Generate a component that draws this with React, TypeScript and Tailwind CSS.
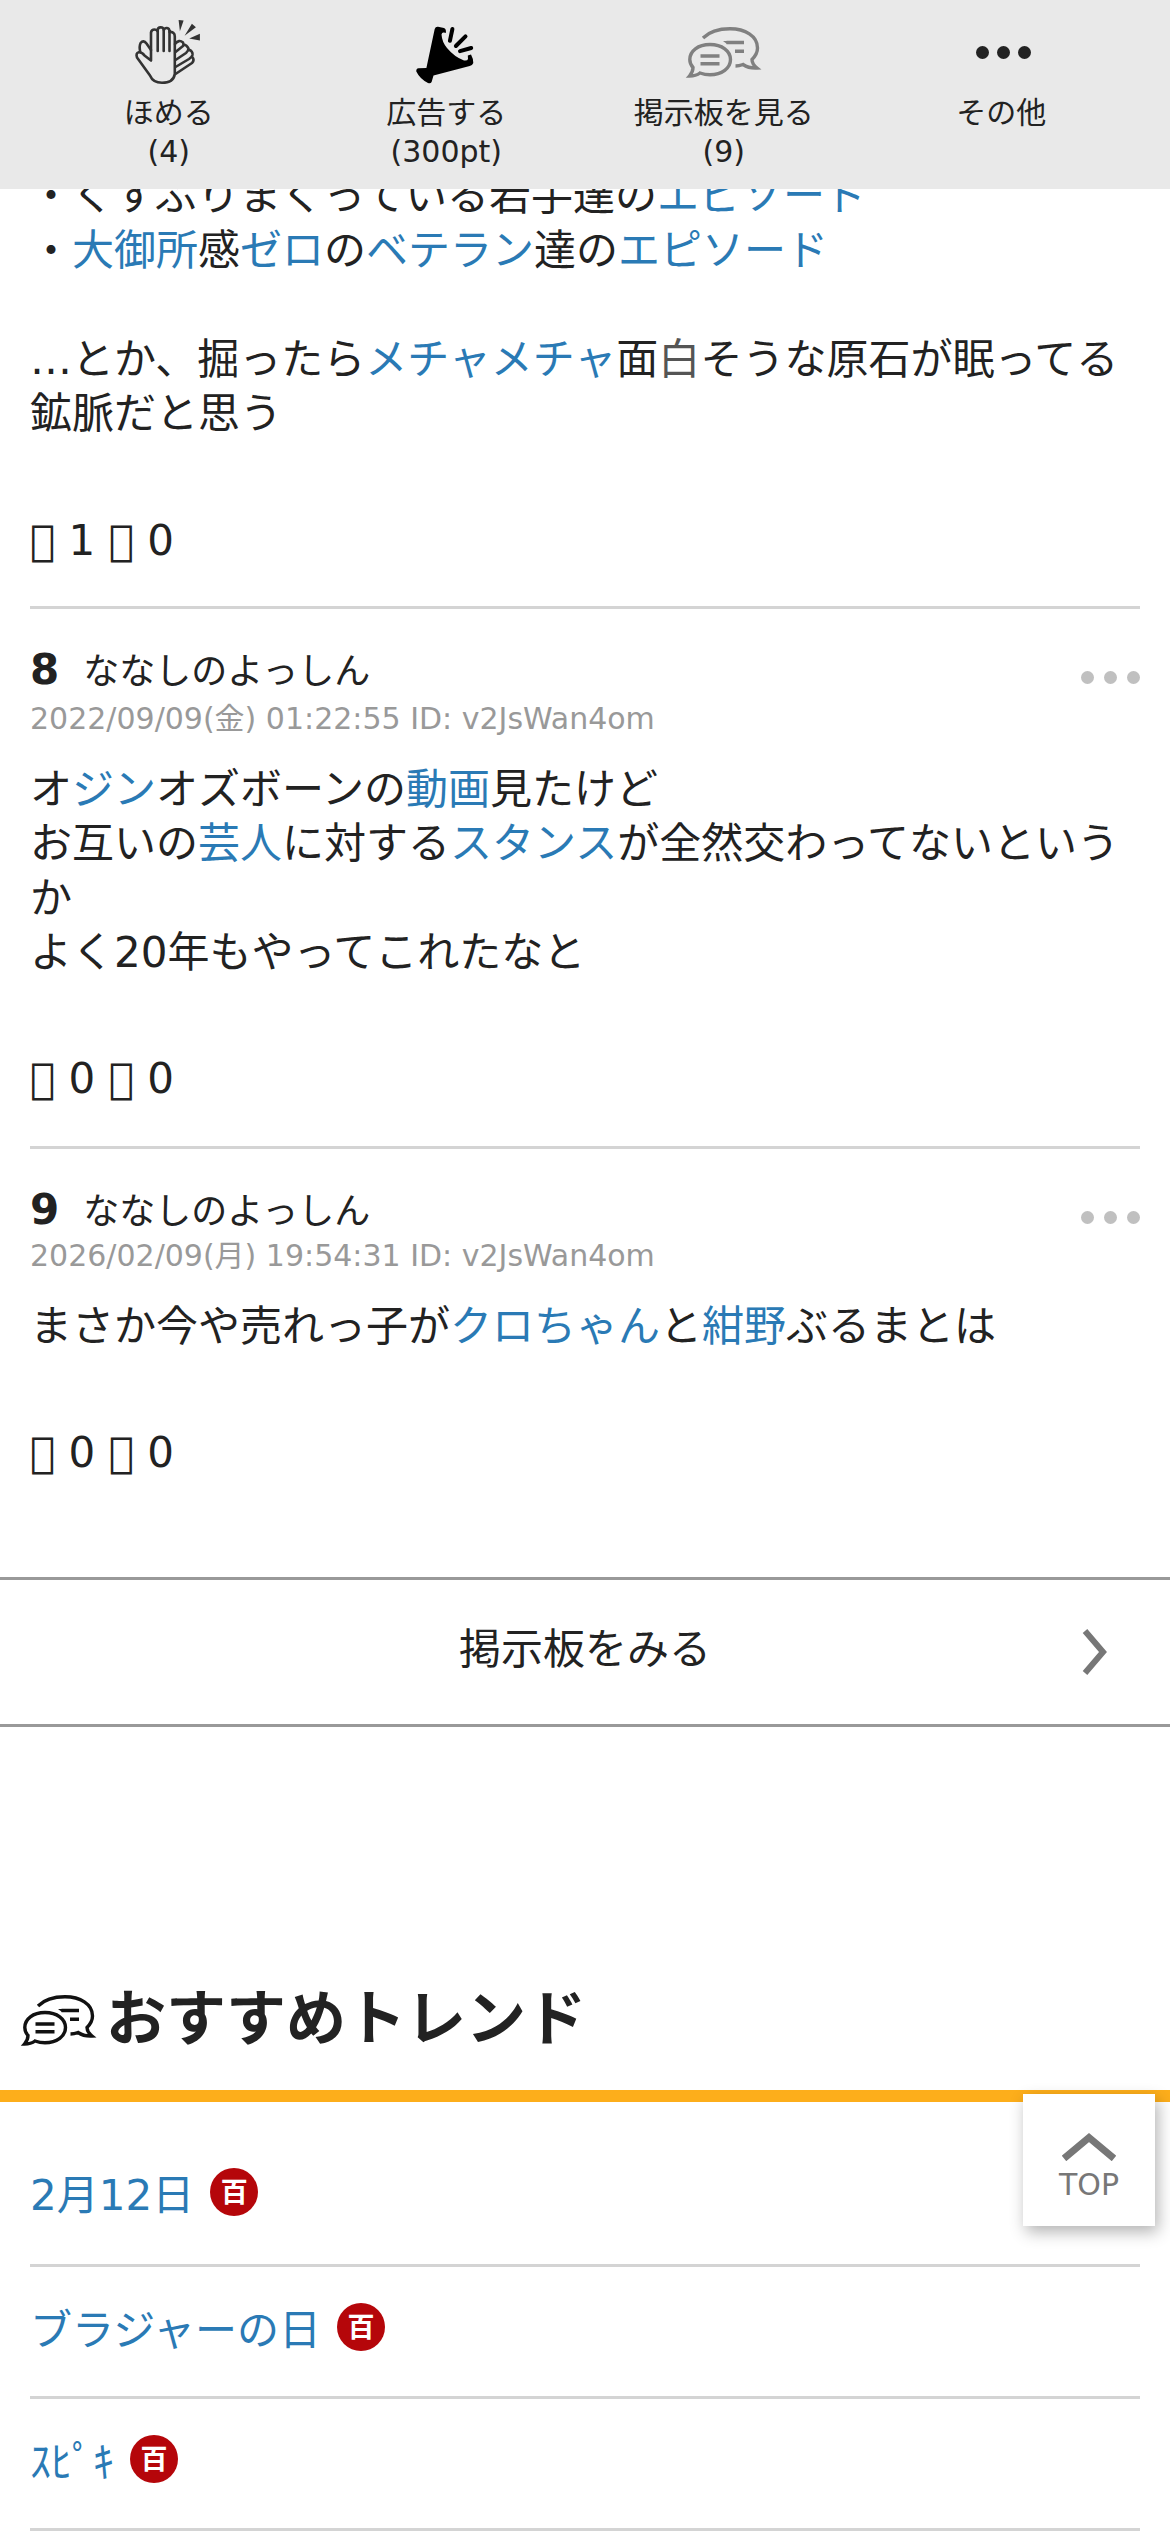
import type { ReactNode } from "react";

const LIKE = "\ue8dc";
const DISLIKE = "\ue8db";

interface Comment {
  no: number;
  name: string;
  meta: string;
  headHeight: string;
  body: ReactNode;
  likes: number;
  dislikes: number;
}

function A({ children }: { children: ReactNode }) {
  return (
    <a href="#" className="text-[#2a7ab5]">
      {children}
    </a>
  );
}

function ClapIcon() {
  return (
    <svg
      width="66"
      height="66"
      viewBox="0 0 66 66"
      fill="none"
      stroke="#333"
      strokeWidth="2.6"
      strokeLinecap="round"
      strokeLinejoin="round"
      className="overflow-visible"
    >
      {/* front hand */}
      <path d="M15 40.5 V12.5 Q15.500 9.500 18.500 9.500 Q20.500 9.500 21.500 11 Q21.500 7.300 24.700 7.200 Q27.500 7.200 27.900 10 Q28.500 7.800 31 8 Q33.600 8.300 33.600 12 Q36 11.500 37.500 13 Q38.800 14 38.800 16.500 V54 Q37.500 62.800 26 62.800 Q17 62.800 14 55.500 L1 37.500 Q-0.500 33.200 2.800 32.300 Q6 32 8.500 35.500 Z" />
      <path d="M21.700 11 V31 M27.700 10 V31 M33.500 12 V31" />
      {/* back hand */}
      <path d="M4.200 32 Q3 26 4.600 23 Q7.500 19.500 10.500 23.500 L15 30" />
      <path d="M39 24 Q43 19 47 22.500 Q48 24 47 26 L39.500 32 M47.500 24.500 Q51 25 52.500 28.500 Q52.500 31 50 33 L39.500 40 M52.500 29.500 Q57 31 56.500 35 Q56 37 53 39 L39.500 47 M56 36.500 Q59 40 56 43 L39.500 54" />
      <path d="M42.600 0 L47.600 0.500 L43.900 11.200 Z M55.900 3.800 L59.900 7.200 L48.600 15.800 Z M63.900 13.800 V20.500 L53.200 18.500 Z" fill="#333" stroke="none" />
    </svg>
  );
}

function MegaphoneIcon() {
  return (
    <svg width="58" height="58" viewBox="0 0 58 58" className="overflow-visible">
      <path d="M17.700 5 Q18.500 2.500 21 2.800 L27 4 Q29.500 5 28.800 9 L27 8.500 Q25 8 24.500 10.500 Q25 18 30 24 Q37.500 33 47 36.500 Q50.500 37 51 35 L50.800 31.500 L54 30.500 Q56.500 35 56.300 39 Q55.500 41.500 52.700 42 L16.500 51.500 L14.600 58 Q13.500 60 11 59 Q3 55 -0.700 47.500 Q-1 44.500 1.500 44.200 L9.400 44 Z" />
      <path d="M35.400 5 L32.900 16.800 M48.500 12.400 L38.900 22 M54.200 24 L43 27.200" stroke="#000" strokeWidth="4" strokeLinecap="round" />
    </svg>
  );
}

function ChatIcon({ color }: { color: string }) {
  return (
    <svg width="72" height="50" viewBox="-1 0 72 50" fill="none" stroke={color} strokeWidth="3.4" className="overflow-visible">
      <path d="M14 10 C22 2 33 0.800 41 0.800 C56 0.800 68.500 8 68.500 20 Q68.500 26 63 31.500 Q63 36 68 40 Q60 40.500 54 36.500 Q50 38 46.500 38" />
      <path d="M4 39.500 Q4 44 0.500 48 Q7 48 11 45 Q16 46.800 21 46.800 C33 46.800 41.500 40 41.500 31.500 C41.500 23 33 16.500 21 16.500 C9 16.500 0.800 23 0.800 31.500 Q0.800 36 4 39.500 Z" />
      <path d="M11.500 28 H30.500 M11.500 35.800 H30.500 M37.500 14.500 H55 M46 23.200 H55" />
      <path d="M34 13 H40 V16 H38 Z" fill={color} stroke="none" />
    </svg>
  );
}

function Dots({ className, gap }: { className: string; gap: string }) {
  return (
    <span className={`flex ${gap}`}>
      <i className={`rounded-full ${className}`} />
      <i className={`rounded-full ${className}`} />
      <i className={`rounded-full ${className}`} />
    </span>
  );
}

function Badge() {
  return (
    <span className="mb-[9px] ml-[16px] flex size-12 items-center justify-center rounded-full bg-[#b5060a] text-[27px] leading-[27px] font-bold text-white">
      百
    </span>
  );
}

const menu = [
  { label: "ほめる", sub: "(4)", icon: <ClapIcon /> },
  { label: "広告する", sub: "(300pt)", icon: <MegaphoneIcon /> },
  { label: "掲示板を見る", sub: "(9)", icon: <ChatIcon color="#808080" /> },
  { label: "その他", sub: "", icon: <Dots className="size-[13px] bg-[#222]" gap="gap-2 pl-1" /> },
];

const comments: Comment[] = [
  {
    no: 8,
    name: "ななしのよっしん",
    meta: "2022/09/09(金) 01:22:55 ID: v2JsWan4om",
    headHeight: "h-[56px]",
    body: (
      <>
        オ<A>ジン</A>オズボーンの<A>動画</A>見たけど
        <br />
        お互いの<A>芸人</A>に対する<A>スタンス</A>が全然交わってないというか
        <br />
        よく20年もやってこれたなと
      </>
    ),
    likes: 0,
    dislikes: 0,
  },
  {
    no: 9,
    name: "ななしのよっしん",
    meta: "2026/02/09(月) 19:54:31 ID: v2JsWan4om",
    headHeight: "h-[53px]",
    body: (
      <>
        まさか今や売れっ子が<A>クロちゃん</A>と<A>紺野</A>ぶるまとは
      </>
    ),
    likes: 0,
    dislikes: 0,
  },
];

const trends = ["2月12日", "ブラジャーの日", "ｽﾋﾟｷ"];

function Votes({ likes, dislikes }: { likes: number; dislikes: number }) {
  return (
    <div className="leading-[54px]">
      {LIKE} {likes} {DISLIKE} {dislikes}
    </div>
  );
}

export default function App() {
  return (
    <div className="relative h-[2532px] w-[1170px] overflow-hidden bg-white font-['DejaVu_Sans','Noto_Sans_CJK_JP',sans-serif] text-[42px] leading-[54.6px] text-[#222]">
      <header className="absolute inset-x-0 top-0 z-10 grid h-[189px] grid-cols-4 bg-[#e9e9e9] px-[30px] text-center text-[30px] leading-[39px]">
        {menu.map((item) => (
          <div key={item.label} className="flex flex-col items-center">
            <div className="mt-[15px] flex h-[75px] items-center">{item.icon}</div>
            <div className="mt-[3px]">{item.label}</div>
            <div>{item.sub}</div>
          </div>
        ))}
      </header>

      <main>
        <div className="mx-[30px] h-[609px] border-b-[3px] border-[#d4d4d4] pt-[169px]">
          <p>
            ・くすぶりまくっている若手達の<A>エピソード</A>
            <br />・<A>大御所</A>感<A>ゼロ</A>の<A>ベテラン</A>達の<A>エピソード</A>
            <br />
            <br />
            …とか、掘ったら<A>メチャメチャ</A>面<span className="text-[#555]">白</span>そうな原石が眠ってる鉱脈だと思う
          </p>
          <div className="mt-[72px]">
            <Votes likes={1} dislikes={0} />
          </div>
        </div>

        {comments.map((c) => (
          <article
            key={c.no}
            className="mx-[30px] border-[#d4d4d4] pt-[34px] pb-[40px] not-last-of-type:border-b-[3px]"
          >
            <div className={`flex items-start justify-between ${c.headHeight}`}>
              <div className="flex items-baseline gap-6">
                <b>{c.no}</b>
                <span className="text-[36px]">{c.name}</span>
              </div>
              <Dots className="mt-[28px] size-[13px] bg-[#c0c0c0]" gap="gap-[10px]" />
            </div>
            <div className="text-[30px] leading-[39px] text-[#999]">{c.meta}</div>
            <p className="mt-[25px] leading-[54.25px]">{c.body}</p>
            <div className="mt-[72px]">
              <Votes likes={c.likes} dislikes={c.dislikes} />
            </div>
          </article>
        ))}

        <a href="#" className="mt-[57px] flex h-[150px] items-center border-y-[3px] border-[#999] pr-[62px]">
          <span className="flex-1 pb-[3px] pl-[88px] text-center">掲示板をみる</span>
          <svg width="26" height="46" viewBox="0 0 26 46" fill="none" stroke="#777" strokeWidth="6">
            <path d="M3 2 L21 23 L3 44" />
          </svg>
        </a>

        <section>
          <h2 className="mt-[252px] flex h-[123px] gap-[11px] border-b-[12px] border-[#fdae1b] pt-px pl-[23px] text-[60px] leading-[78px] font-bold">
            <span className="mt-[16px]">
              <ChatIcon color="#111" />
            </span>
            おすすめトレンド
          </h2>
          <ul className="mx-[30px] pt-[30px]">
            {trends.map((t) => (
              <li
                key={t}
                className="flex h-[132px] items-center border-b-[3px] border-[#d4d4d4] first:h-[135px] first:pb-[3px]"
              >
                <A>{t}</A>
                <Badge />
              </li>
            ))}
          </ul>
        </section>
      </main>

      <a
        href="#"
        className="absolute top-[2094px] left-[1023px] z-10 flex size-[132px] flex-col items-center bg-white pt-[39px] text-[30px] leading-[36px] text-[#777] shadow-[3px_6px_15px_rgba(0,0,0,0.3)]"
      >
        <svg width="54" height="28" viewBox="0 0 54 28" fill="none" stroke="#777" strokeWidth="7">
          <path d="M2 25.500 L27 4.600 L52 25.500" />
        </svg>
        <span className="mt-[6px]">TOP</span>
      </a>
    </div>
  );
}
